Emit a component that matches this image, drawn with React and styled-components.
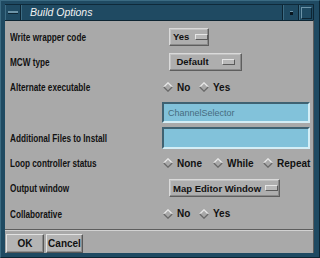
import React from "react";
import styled, { createGlobalStyle } from "styled-components";

const GlobalStyle = createGlobalStyle`
  html, body {
    margin: 0;
    padding: 0;
    background: #1c3e52;
  }
`;

const Window = styled.div`
  width: 320px;
  height: 258px;
  box-sizing: border-box;
  background: #1f4a62;
  border-top: 1px solid #3a6a82;
  border-left: 1px solid #3a6a82;
  border-right: 1px solid #0c2432;
  border-bottom: 1px solid #0c2432;
  padding: 3px 5px 4px 4px;
  display: flex;
  flex-direction: column;
  font-family: "Liberation Sans", Arial, sans-serif;
`;

const TitleBar = styled.div`
  height: 16px;
  display: flex;
  align-items: stretch;
  border-top: 1px solid #0f2a3a;
`;

const FrameButton = styled.div`
  width: ${p => p.$w}px;
  box-sizing: border-box;
  display: flex;
  align-items: center;
  justify-content: center;
  border-left: 1px solid #3d6c84;
  border-right: 1px solid #0d2533;
`;

const Dash = styled.div`
  width: 10px;
  height: 2px;
  background: #6d94a8;
  border-bottom: 1px solid #0d2533;
`;

const Dot = styled.div`
  width: 3px;
  height: 3px;
  background: #08161f;
  border-top: 1px solid #6d94a8;
`;

const MaxBox = styled.div`
  width: 9px;
  height: 10px;
  border: 1px solid #6d94a8;
  border-right-color: #0d2533;
  border-bottom-color: #0d2533;
`;

const Title = styled.div`
  flex: 1;
  color: #f2f2f2;
  font-style: italic;
  font-size: 10.5px;
  line-height: 15px;
  padding-left: 8px;
  border-left: 1px solid #3d6c84;
  border-right: 1px solid #0d2533;
`;

const Body = styled.div`
  flex: 1;
  background: #a9a9a9;
  display: flex;
  flex-direction: column;
  border-top: 1px solid #0d2533;
  border-right: 1px solid #5d5d5d;
`;

const Form = styled.div`
  display: grid;
  grid-template-columns: 152px 1fr;
  grid-auto-rows: 25.3px;
  padding: 3px 3px 0 5px;
  height: 206px;
  box-sizing: border-box;
`;

const Label = styled.div`
  display: flex;
  align-items: center;
  padding-top: 1px;
`;

// the dialog font is a narrow helvetica; squeeze the bold face to its width
const LabelText = styled.span`
  display: inline-block;
  white-space: nowrap;
  font-size: 10px;
  font-weight: bold;
  color: #111;
  transform: scaleX(0.82);
  transform-origin: left center;
`;

const Control = styled.div`
  display: flex;
  align-items: center;
`;

const OptionButton = styled.div`
  margin-left: 7px;
  width: ${p => p.$w}px;
  height: 18px;
  box-sizing: border-box;
  display: flex;
  align-items: center;
  justify-content: ${p => (p.$center ? "center" : "flex-start")};
  gap: ${p => p.$gap || 6}px;
  padding-left: ${p => (p.$center ? 0 : 3)}px;
  background: #aeaeae;
  border-top: 1px solid #dadada;
  border-left: 1px solid #dadada;
  border-right: 1px solid #5e5e5e;
  border-bottom: 1px solid #5e5e5e;
  box-shadow: inset -1px -1px 0 #8a8a8a, inset 1px 1px 0 #c2c2c2;
  font-size: 9.5px;
  font-weight: bold;
  white-space: nowrap;
  color: #111;
`;

const Indicator = styled.span`
  flex: none;
  width: 11px;
  height: 4px;
  background: #b8b8b8;
  border-top: 1px solid #e6e6e6;
  border-left: 1px solid #e6e6e6;
  border-right: 1px solid #5a5a5a;
  border-bottom: 1px solid #5a5a5a;
`;

const RadioGroup = styled.div`
  display: flex;
  align-items: center;
  padding-left: 1px;
`;

const RadioItem = styled.div`
  display: flex;
  align-items: center;
  gap: 4px;
  width: ${p => p.$w}px;
  font-size: 10px;
  font-weight: bold;
  color: #111;
`;

const Field = styled.div`
  width: 148px;
  height: ${p => p.$h}px;
  box-sizing: border-box;
  background: #82c2da;
  border-top: 2px solid #3f6272;
  border-left: 2px solid #3f6272;
  border-right: 2px solid #d4eef6;
  border-bottom: 2px solid #d4eef6;
  padding-left: 4px;
  display: flex;
  align-items: center;
  font-size: 9px;
  color: #466c7e;
`;

const Separator = styled.div`
  margin-top: 2px;
  height: 0;
  border-top: 1px solid #5e5e5e;
  border-bottom: 1px solid #d2d2d2;
`;

const ButtonBar = styled.div`
  display: flex;
  gap: 2px;
  padding: 3px 0 0 1px;
`;

const PushButton = styled.div`
  width: ${p => p.$w}px;
  height: 19px;
  box-sizing: border-box;
  display: flex;
  align-items: center;
  justify-content: center;
  background: #b4b4b4;
  border-top: 1px solid #e2e2e2;
  border-left: 1px solid #e2e2e2;
  border-right: 1px solid #585858;
  border-bottom: 1px solid #585858;
  box-shadow: inset -1px -1px 0 #8c8c8c;
  font-size: 10px;
  font-weight: bold;
  color: #111;
`;

const Diamond = () => (
  <svg width="10" height="10" viewBox="0 0 10 10">
    <polygon points="5,0.5 9.5,5 5,9.5 0.5,5" fill="#a9a9a9" />
    <polyline points="0.8,5 5,0.8 9.2,5" fill="none" stroke="#e8e8e8" strokeWidth="1.3" />
    <polyline points="0.8,5 5,9.2 9.2,5" fill="none" stroke="#6a6a6a" strokeWidth="1.3" />
  </svg>
);

const Radio = ({ label, w }) => (
  <RadioItem $w={w}>
    <Diamond />
    {label}
  </RadioItem>
);

const Row = ({ label, children }) => (
  <>
    <Label>{label && <LabelText>{label}</LabelText>}</Label>
    <Control>{children}</Control>
  </>
);

export default function App() {
  return (
    <>
      <GlobalStyle />
      <Window>
        <TitleBar>
          <FrameButton $w={16}>
            <Dash />
          </FrameButton>
          <Title>Build Options</Title>
          <FrameButton $w={16}>
            <Dot />
          </FrameButton>
          <FrameButton $w={15}>
            <MaxBox />
          </FrameButton>
        </TitleBar>
        <Body>
          <Form>
            <Row label="Write wrapper code">
              <OptionButton $w={40}>
                Yes <Indicator />
              </OptionButton>
            </Row>
            <Row label="MCW type">
              <OptionButton $w={73} $center $gap={13}>
                Default <Indicator />
              </OptionButton>
            </Row>
            <Row label="Alternate executable">
              <RadioGroup>
                <Radio label="No" w={36} />
                <Radio label="Yes" />
              </RadioGroup>
            </Row>
            <Row>
              <Field $h={21}>ChannelSelector</Field>
            </Row>
            <Row label="Additional Files to Install">
              <Field $h={22} />
            </Row>
            <Row label="Loop controller status">
              <RadioGroup>
                <Radio label="None" w={50} />
                <Radio label="While" w={50} />
                <Radio label="Repeat" />
              </RadioGroup>
            </Row>
            <Row label="Output window">
              <OptionButton $w={111} $gap={4}>
                Map Editor Window <Indicator />
              </OptionButton>
            </Row>
            <Row label="Collaborative">
              <RadioGroup>
                <Radio label="No" w={36} />
                <Radio label="Yes" />
              </RadioGroup>
            </Row>
          </Form>
          <Separator />
          <ButtonBar>
            <PushButton $w={38}>OK</PushButton>
            <PushButton $w={37}>Cancel</PushButton>
          </ButtonBar>
        </Body>
      </Window>
    </>
  );
}
